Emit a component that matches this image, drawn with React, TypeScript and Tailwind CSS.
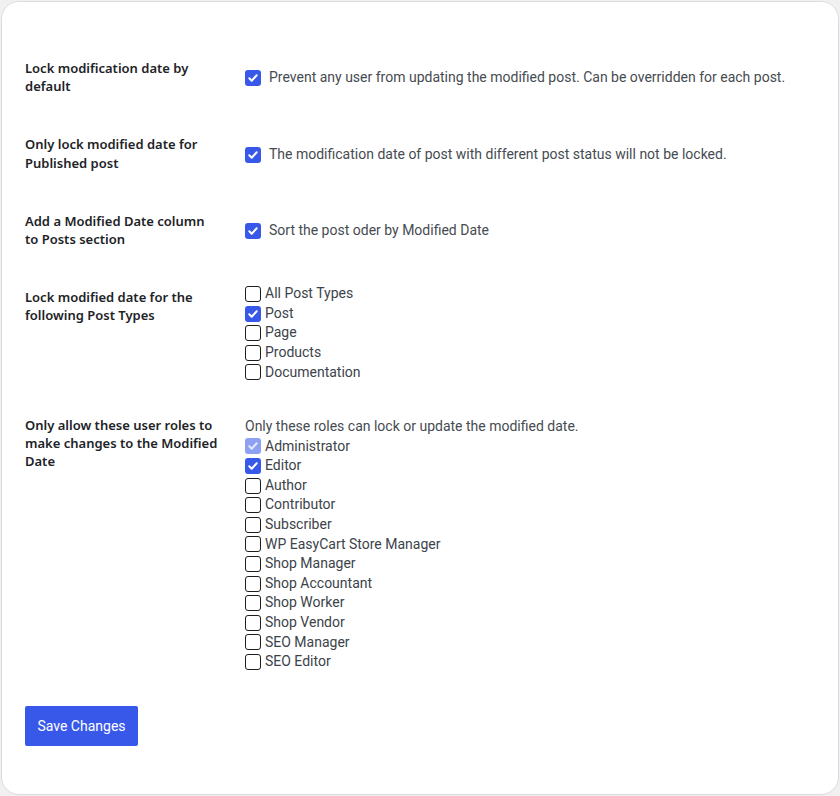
import React from 'react';

type Box = { label: string; checked?: boolean; disabled?: boolean };

const Check: React.FC<{ checked?: boolean; disabled?: boolean }> = ({ checked, disabled }) => {
  if (!checked) {
    return <span className="block w-4 h-4 shrink-0 rounded-[3px] border-[1.5px] border-[#1e1e1e] bg-white"></span>;
  }
  return (
    <span className={`flex w-4 h-4 shrink-0 items-center justify-center rounded-[3px] ${disabled ? 'bg-[#8da0f2]' : 'bg-[#3858e9]'}`}>
      <svg width="12" height="12" viewBox="0 0 12 12" fill="none">
        <path d="M2.3 6.3l2.4 2.4 5-5.4" stroke={disabled ? '#e4e9fc' : '#ffffff'} strokeWidth="2" strokeLinecap="round" strokeLinejoin="round" />
      </svg>
    </span>
  );
};

const postTypes: Box[] = [
  { label: 'All Post Types' },
  { label: 'Post', checked: true },
  { label: 'Page' },
  { label: 'Products' },
  { label: 'Documentation' },
];

const roles: Box[] = [
  { label: 'Administrator', checked: true, disabled: true },
  { label: 'Editor', checked: true },
  { label: 'Author' },
  { label: 'Contributor' },
  { label: 'Subscriber' },
  { label: 'WP EasyCart Store Manager' },
  { label: 'Shop Manager' },
  { label: 'Shop Accountant' },
  { label: 'Shop Worker' },
  { label: 'Shop Vendor' },
  { label: 'SEO Manager' },
  { label: 'SEO Editor' },
];

const Row: React.FC<{ label: string; children: React.ReactNode }> = ({ label, children }) => (
  <div className="flex">
    <div className="w-[210px] shrink-0 pr-[15px] py-[20px] font-['Noto_Sans',sans-serif] text-[13px] leading-[1.4] font-semibold text-[#1d2327]">{label}</div>
    <div className="flex flex-1 items-center pl-[10px] pt-[16px] pb-[14px]">{children}</div>
  </div>
);

const Single: React.FC<{ text: string }> = ({ text }) => (
  <label className="flex items-center gap-2 text-sm leading-[1.4] text-[#464b51]">
    <Check checked />
    <span>{text}</span>
  </label>
);

const List: React.FC<{ items: Box[] }> = ({ items }) => (
  <div className="flex flex-col">
    {items.map(i => (
      <label key={i.label} className="flex items-center gap-1 h-[19.6px] text-sm leading-[1.4] text-[#3c434a]">
        <Check checked={i.checked} disabled={i.disabled} />
        <span>{i.label}</span>
      </label>
    ))}
  </div>
);

export default function App() {
  return (
    <div className="min-h-[796px] bg-[#f0f0f1] p-px font-['Roboto',sans-serif]">
      <div className="h-[794px] rounded-[18px] border border-[#dcdcde] bg-white pl-[23px] pt-[37px]">
        <Row label="Lock modification date by default">
          <Single text="Prevent any user from updating the modified post. Can be overridden for each post." />
        </Row>
        <Row label="Only lock modified date for Published post">
          <Single text="The modification date of post with different post status will not be locked." />
        </Row>
        <Row label="Add a Modified Date column to Posts section">
          <Single text="Sort the post oder by Modified Date" />
        </Row>
        <Row label="Lock modified date for the following Post Types">
          <div className="self-start">
            <List items={postTypes} />
          </div>
        </Row>
        <Row label="Only allow these user roles to make changes to the Modified Date">
          <div className="self-start">
            <p className="mt-[5px] text-sm leading-[1.4] text-[#464b51]">Only these roles can lock or update the modified date.</p>
            <List items={roles} />
          </div>
        </Row>
        <button className="mt-[20px] h-10 w-[113px] rounded-[2px] bg-[#3858e9] text-sm text-white">Save Changes</button>
      </div>
    </div>
  );
}
